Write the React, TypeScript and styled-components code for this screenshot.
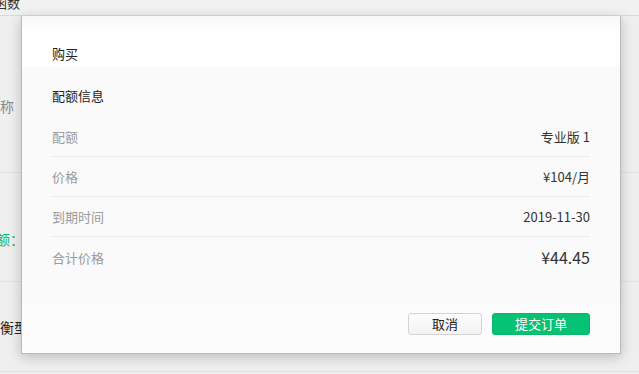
import React from "react";
import styled, { createGlobalStyle } from "styled-components";

const GlobalStyle = createGlobalStyle`
  html, body {
    margin: 0;
    padding: 0;
    background: #efefef;
    font-family: "Noto Sans CJK SC", "Noto Sans", sans-serif;
    overflow: hidden;
  }
`;

const Page = styled.div`
  position: relative;
  width: 639px;
  height: 374px;
  overflow: hidden;
  background: #efefef;
`;

const TopBar = styled.div`
  height: 15px;
  border-bottom: 1px solid #dadada;
  background: #f1f1f1;
  font-size: 13px;
  line-height: 6px;
  color: #333;
  overflow: hidden;
  white-space: nowrap;
`;

const TopLabel = styled.span`
  display: inline-block;
  margin-left: -6px;
  margin-top: -2px;
`;

const ListRow = styled.div<{ $height: number; $pad: number }>`
  height: ${(p) => p.$height}px;
  box-sizing: border-box;
  padding-top: ${(p) => p.$pad}px;
  border-bottom: 1px solid #e2e2e2;
  display: flex;
  align-items: center;
  justify-content: space-between;
  font-size: 14px;
  white-space: nowrap;
`;

const EdgeText = styled.span<{ $color: string; $offset: number }>`
  color: ${(p) => p.$color};
  margin-left: ${(p) => p.$offset}px;
`;

const EdgeMark = styled.span`
  color: #c4511b;
  font-size: 12px;
  margin-right: -8px;
`;

const Modal = styled.div`
  position: absolute;
  left: 21px;
  top: 16px;
  width: 598px;
  height: 337px;
  display: flex;
  flex-direction: column;
  border: 1px solid #b9b9b9;
  border-top: none;
  background: #fbfbfb;
  box-shadow: 0 3px 12px rgba(0, 0, 0, 0.22);
`;

const Header = styled.div`
  height: 50px;
  box-sizing: border-box;
  padding: 30px 0 0 30px;
  background: linear-gradient(#f7f7f7, #ffffff 30%);
  font-size: 13px;
  color: #222;
  line-height: 16px;
`;

const Body = styled.div`
  height: 237px;
  box-sizing: border-box;
  padding: 22px 30px 0 30px;
  background: #fafafa;
`;

const SectionTitle = styled.div`
  font-size: 13px;
  color: #222;
  line-height: 16px;
  margin-bottom: 13px;
`;

const InfoRow = styled.div<{ $last?: boolean }>`
  height: 40px;
  box-sizing: border-box;
  display: flex;
  align-items: center;
  justify-content: space-between;
  border-bottom: ${(p) => (p.$last ? "none" : "1px solid #ebebeb")};
`;

const Label = styled.span`
  font-size: 13px;
  color: #9a9a9a;
`;

const Value = styled.span<{ $big?: boolean }>`
  font-size: ${(p) => (p.$big ? "16px" : "13px")};
  color: #333;
`;

const Footer = styled.div`
  flex: 1;
  display: flex;
  justify-content: flex-end;
  align-items: flex-start;
  gap: 10px;
  padding: 10px 30px 0 0;
  background: #fcfcfc;
`;

const Button = styled.button<{ $primary?: boolean }>`
  height: 22px;
  width: ${(p) => (p.$primary ? "98px" : "74px")};
  border-radius: 3px;
  font-family: "Noto Sans CJK SC", "Noto Sans", sans-serif;
  font-size: 13px;
  line-height: 20px;
  padding: 0;
  cursor: pointer;
  border: 1px solid ${(p) => (p.$primary ? "#07b86a" : "#d4d4d4")};
  background: ${(p) =>
    p.$primary ? "#07c174" : "linear-gradient(#fdfdfd, #f3f3f3)"};
  color: ${(p) => (p.$primary ? "#fff" : "#222")};
`;

const rows = [
  { label: "配额", value: "专业版 1" },
  { label: "价格", value: "¥104/月" },
  { label: "到期时间", value: "2019-11-30" },
];

export default function App() {
  return (
    <Page>
      <GlobalStyle />
      <TopBar>
        <TopLabel>函数</TopLabel>
      </TopBar>
      <ListRow $height={157} $pad={24}>
        <EdgeText $color="#888" $offset={-14}>名称</EdgeText>
        <EdgeMark>*</EdgeMark>
      </ListRow>
      <ListRow $height={109} $pad={24}>
        <EdgeText $color="#07b86a" $offset={-18}>配额：</EdgeText>
      </ListRow>
      <ListRow $height={90} $pad={0}>
        <EdgeText $color="#222" $offset={-14}>均衡型</EdgeText>
      </ListRow>

      <Modal>
        <Header>购买</Header>
        <Body>
          <SectionTitle>配额信息</SectionTitle>
          {rows.map((r) => (
            <InfoRow key={r.label}>
              <Label>{r.label}</Label>
              <Value>{r.value}</Value>
            </InfoRow>
          ))}
          <InfoRow $last>
            <Label>合计价格</Label>
            <Value $big>¥44.45</Value>
          </InfoRow>
        </Body>
        <Footer>
          <Button>取消</Button>
          <Button $primary>提交订单</Button>
        </Footer>
      </Modal>
    </Page>
  );
}
